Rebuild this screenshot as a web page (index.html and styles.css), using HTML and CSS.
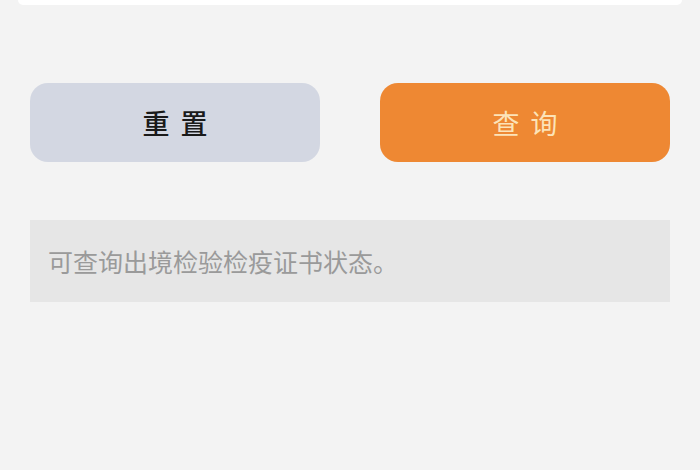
FILE: index.html
```html
<!DOCTYPE html>
<html lang="zh">
<head>
<meta charset="utf-8">
<link rel="stylesheet" href="styles.css">
</head>
<body>
<div class="page">
  <div class="top-card"></div>
  <div class="actions">
    <button class="btn btn-reset">重置</button>
    <button class="btn btn-query">查询</button>
  </div>
  <div class="info">可查询出境检验检疫证书状态。</div>
</div>
</body>
</html>
```
FILE: styles.css
```css
html, body {
  margin: 0;
  padding: 0;
}
body {
  background: #f3f3f3;
  width: 700px;
  height: 470px;
  overflow: hidden;
  font-family: "Noto Sans CJK SC", "Noto Sans", sans-serif;
}
.page {
  display: flex;
  flex-direction: column;
}
.top-card {
  height: 5px;
  margin: 0 18px;
  background: #ffffff;
  border-radius: 0 0 6px 6px;
}
.actions {
  display: flex;
  gap: 60px;
  padding: 0 30px;
  margin-top: 78px;
}
.btn {
  flex: 1;
  height: 79px;
  border: none;
  border-radius: 18px;
  font-family: "Noto Sans CJK SC", sans-serif;
  font-size: 27px;
  letter-spacing: 11px;
  text-indent: 11px;
  display: flex;
  align-items: center;
  justify-content: center;
  padding: 0;
}
.btn-reset {
  background: #d3d7e2;
  color: #1a1a1a;
  font-weight: 500;
}
.btn-query {
  background: #ee8833;
  color: #fce3b8;
  font-weight: 400;
}
.info {
  margin: 58px 30px 0;
  height: 82px;
  background: #e6e6e6;
  color: #9a9a9a;
  font-size: 25px;
  padding-left: 18px;
  display: flex;
  align-items: center;
}
```
